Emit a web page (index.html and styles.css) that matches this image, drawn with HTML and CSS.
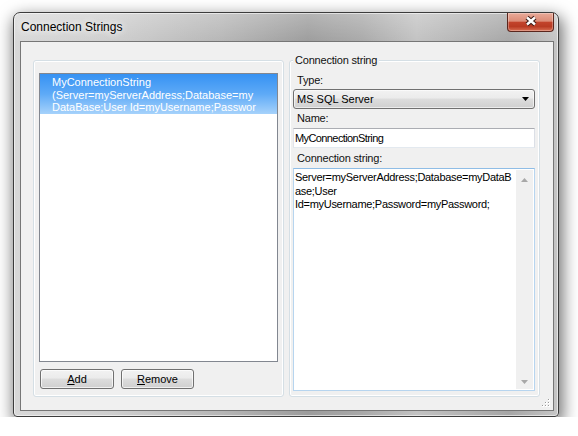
FILE: index.html
```html
<!DOCTYPE html>
<html lang="en">
<head>
  <meta charset="UTF-8">
  <title>Connection Strings</title>
  <link rel="stylesheet" href="styles.css">
</head>
<body>

<div class="window">
  <div class="titlebar">
    <span class="title">Connection Strings</span>
    <div class="close-btn">
      <svg width="47" height="19" viewBox="0 0 47 19">
        <path d="M20 5.5 L28 12.5 M28 5.5 L20 12.5" stroke="#3a1812" stroke-width="4.4" fill="none"/>
        <path d="M20 5.5 L28 12.5 M28 5.5 L20 12.5" stroke="#ffffff" stroke-width="2.4" fill="none"/>
      </svg>
    </div>
  </div>

  <div class="client">
    <!-- List of connection strings -->
    <div class="group list-group">
      <div class="listbox">
        <div class="list-item selected">
          <div>MyConnectionString</div>
          <div>(Server=myServerAddress;Database=my</div>
          <div>DataBase;User Id=myUsername;Passwor</div>
        </div>
      </div>
      <div class="button-row">
        <button class="btn btn-add"><u>A</u>dd</button>
        <button class="btn btn-remove"><u>R</u>emove</button>
      </div>
    </div>

    <!-- Details of the selected string -->
    <div class="group details-group">
      <span class="group-title">Connection string</span>
      <label class="field-label label-type">Type:</label>
      <div class="combo">
        <span>MS SQL Server</span>
        <svg class="combo-arrow" width="7" height="4" viewBox="0 0 7 4"><polygon points="0,0 7,0 3.5,4" fill="#000"/></svg>
      </div>
      <label class="field-label label-name">Name:</label>
      <div class="textbox">MyConnectionString</div>
      <label class="field-label label-conn">Connection string:</label>
      <div class="textarea">
        <div class="textarea-text">Server=myServerAddress;Database=myDataB<br>ase;User<br>Id=myUsername;Password=myPassword;</div>
        <div class="scrollbar">
          <svg width="7" height="4" viewBox="0 0 7 4"><polygon points="0,4 7,4 3.5,0" fill="#a8a8a8"/></svg>
          <svg width="7" height="4" viewBox="0 0 7 4"><polygon points="0,0 7,0 3.5,4" fill="#a8a8a8"/></svg>
        </div>
      </div>
    </div>

    <svg class="size-grip" width="8" height="8" viewBox="0 0 8 8">
      <rect x="6" y="0" width="2" height="2" fill="#fff"/><rect x="6" y="0" width="1" height="1" fill="#9a9a9a"/>
      <rect x="3" y="3" width="2" height="2" fill="#fff"/><rect x="3" y="3" width="1" height="1" fill="#9a9a9a"/>
      <rect x="6" y="3" width="2" height="2" fill="#fff"/><rect x="6" y="3" width="1" height="1" fill="#9a9a9a"/>
      <rect x="0" y="6" width="2" height="2" fill="#fff"/><rect x="0" y="6" width="1" height="1" fill="#9a9a9a"/>
      <rect x="3" y="6" width="2" height="2" fill="#fff"/><rect x="3" y="6" width="1" height="1" fill="#9a9a9a"/>
      <rect x="6" y="6" width="2" height="2" fill="#fff"/><rect x="6" y="6" width="1" height="1" fill="#9a9a9a"/>
    </svg>
  </div>
</div>

</body>
</html>
```

FILE: styles.css
```css
body {
  margin: 0;
  background: #ffffff;
  font-family: "Liberation Sans", Arial, sans-serif;
  font-size: 11px;
  color: #111111;
}

/* Window frame */
.window {
  width: 544px;
  height: 403px;
  margin: 12px 0 0 13px;
  border: 1px solid #3c3c3c;
  border-radius: 7px 7px 4px 4px;
  background:
    linear-gradient(180deg, rgba(255, 255, 255, 0.25), rgba(255, 255, 255, 0) 30px),
    linear-gradient(90deg, #d8d8d8 0%, #cecece 18%, #b6b6b6 38%, #9c9c9c 54%, #a9a9a9 64%, #c2c2c2 74%, #b2b2b2 84%, #a6a6a6 91%, #c6c6c6 100%);
  box-shadow: 2px 6px 16px 2px rgba(0, 0, 0, 0.55), inset 0 0 0 1px rgba(255, 255, 255, 0.55);
  display: flex;
  flex-direction: column;
}

.titlebar {
  height: 28px;
  display: flex;
  align-items: flex-start;
  padding-left: 7px;
}

.title {
  line-height: 28px;
  font-size: 12px;
  color: #000000;
  text-shadow: 0 0 6px #ffffff, 0 0 10px rgba(255, 255, 255, 0.8);
}

.close-btn {
  margin-left: auto;
  margin-right: 4px;
  width: 47px;
  height: 19px;
  box-sizing: border-box;
  border: 1px solid #5a261d;
  border-top: none;
  border-radius: 0 0 4px 4px;
  background: linear-gradient(180deg, #e9aa99 0%, #dc8c77 45%, #c2432b 52%, #b93b23 75%, #d86e52 100%);
  box-shadow: inset 0 0 0 1px rgba(255, 255, 255, 0.3);
}

.close-btn svg {
  display: block;
  margin: -1px 0 0 -1px;
}

/* Client area */
.client {
  position: relative;
  height: 370px;
  margin: 0 4px 0 6px;
  box-sizing: border-box;
  border: 1px solid #767676;
  background: #f0f0f0;
  padding: 18px 13px 13px 12px;
  display: grid;
  grid-template-columns: 251px 251px;
  gap: 5px;
}

.group {
  border: 1px solid #d5dfe5;
  border-radius: 3px;
  box-shadow: inset 0 0 0 1px #ffffff;
  box-sizing: border-box;
  display: flex;
  flex-direction: column;
}

/* Left group: list and buttons */
.list-group {
  padding: 12px 5px 7px 5px;
}

.listbox {
  flex: 1;
  border: 1px solid #828790;
  background: #ffffff;
  overflow: hidden;
}

.list-item {
  padding: 2px 0 0 12px;
  line-height: 12.5px;
  white-space: nowrap;
  overflow: hidden;
}

.list-item.selected {
  background: linear-gradient(180deg, #3692f3 0%, #5eaaf7 50%, #a6d2fb 100%);
  color: #ffffff;
}

.button-row {
  display: flex;
  gap: 7px;
  margin-top: 7px;
  padding-left: 1px;
}

.btn {
  height: 20px;
  padding: 0;
  font: inherit;
  color: #000000;
  border: 1px solid #707070;
  border-radius: 3px;
  background: linear-gradient(180deg, #f2f2f2 0%, #ebebeb 45%, #dddddd 50%, #cfcfcf 100%);
  box-shadow: inset 0 0 0 1px rgba(255, 255, 255, 0.7);
}

.btn-add {
  width: 74px;
}

.btn-remove {
  width: 73px;
}

/* Right group: details */
.details-group {
  position: relative;
  padding: 11px 4px 5px 3px;
}

.group-title {
  position: absolute;
  top: -8px;
  left: 3px;
  padding: 0 2px;
  line-height: 14px;
  background: #f0f0f0;
  letter-spacing: -0.2px;
}

.field-label {
  display: block;
  padding-left: 4px;
  letter-spacing: -0.2px;
}

.label-type {
  line-height: 17px;
}

.label-name {
  line-height: 19px;
}

.label-conn {
  line-height: 20px;
}

.combo {
  height: 20px;
  box-sizing: border-box;
  border: 1px solid #707070;
  border-radius: 3px;
  background: linear-gradient(180deg, #f2f2f2 0%, #ebebeb 45%, #dddddd 50%, #cfcfcf 100%);
  box-shadow: inset 0 0 0 1px rgba(255, 255, 255, 0.6);
  display: flex;
  align-items: center;
  justify-content: space-between;
  padding: 0 5px 0 3px;
  color: #000000;
}

.combo-arrow {
  display: block;
}

.textbox {
  height: 20px;
  box-sizing: border-box;
  border: 1px solid;
  border-color: #abadb3 #dbdfe6 #e3e9ef #e2e3ea;
  background: #ffffff;
  padding-left: 1px;
  line-height: 18px;
  letter-spacing: -0.6px;
  color: #000000;
}

.textarea {
  flex: 1;
  display: flex;
  box-sizing: border-box;
  border: 1px solid;
  border-color: #8fbde6 #b7d5ef #b7d5ef #b7d5ef;
  background: #ffffff;
  color: #000000;
}

.textarea-text {
  flex: 1;
  padding: 2px 0 0 1px;
  line-height: 13.5px;
  letter-spacing: -0.3px;
  white-space: nowrap;
}

.scrollbar {
  width: 17px;
  margin: 1px 1px 1px 0;
  padding: 8px 0 5px 0;
  box-sizing: border-box;
  background: #f0f0f0;
  display: flex;
  flex-direction: column;
  justify-content: space-between;
  align-items: center;
}

.scrollbar svg {
  display: block;
}

.size-grip {
  position: absolute;
  right: 3px;
  bottom: 3px;
}
```
